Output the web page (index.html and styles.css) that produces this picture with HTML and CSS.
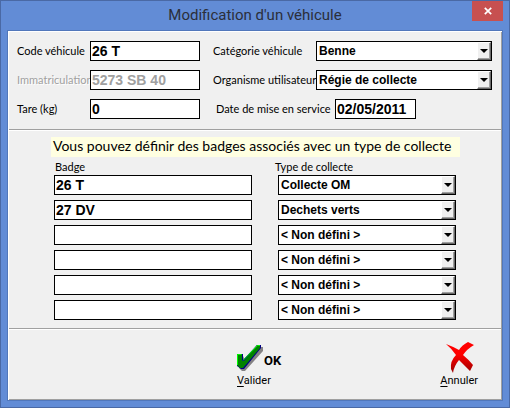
FILE: index.html
```html
<!DOCTYPE html>
<html lang="fr">
<head>
<meta charset="utf-8">
<title>Modification d'un véhicule</title>
<link rel="stylesheet" href="styles.css">
</head>
<body>
<form class="window">
  <header class="titlebar">
    <h1 class="title">Modification d'un véhicule</h1>
    <button type="button" class="close" aria-label="Fermer">
      <svg width="8" height="8" viewBox="0 0 8 8"><path d="M.8 .8 7.2 7.2M7.2 .8 .8 7.2" stroke="#fff" stroke-width="1.7"/></svg>
    </button>
  </header>
  <main class="client">
    <section class="panel vehicle">
      <div class="fields">
        <label for="code">Code véhicule</label>
        <input class="box" id="code" value="26 T">
        <label for="immat" class="off">Immatriculation</label>
        <input class="box" id="immat" value="5273 SB 40" disabled>
        <label for="tare">Tare (kg)</label>
        <input class="box" id="tare" value="0">
      </div>
      <div class="rows">
        <div class="row">
          <label for="cat">Catégorie véhicule</label>
          <span class="combo"><select class="box" id="cat"><option>Benne</option></select><span class="drop"></span></span>
        </div>
        <div class="row">
          <label for="org">Organisme utilisateur</label>
          <span class="combo"><select class="box" id="org"><option>Régie de collecte</option></select><span class="drop"></span></span>
        </div>
        <div class="row service">
          <label for="date">Date de mise en service</label>
          <input class="box date" id="date" value="02/05/2011">
        </div>
      </div>
    </section>
    <section class="panel badges">
      <p class="notice">Vous pouvez définir des badges associés avec un type de collecte</p>
      <div class="pairs">
        <label for="b1">Badge</label>
        <label for="t1" class="type">Type de collecte</label>
        <input class="box" id="b1" value="26 T">
        <span class="combo"><select class="box" id="t1"><option>Collecte OM</option></select><span class="drop"></span></span>
        <input class="box" aria-label="Badge 2" value="27 DV">
        <span class="combo"><select class="box" aria-label="Type 2"><option>Dechets verts</option></select><span class="drop"></span></span>
        <input class="box" aria-label="Badge 3">
        <span class="combo"><select class="box" aria-label="Type 3"><option>&lt; Non défini &gt;</option></select><span class="drop"></span></span>
        <input class="box" aria-label="Badge 4">
        <span class="combo"><select class="box" aria-label="Type 4"><option>&lt; Non défini &gt;</option></select><span class="drop"></span></span>
        <input class="box" aria-label="Badge 5">
        <span class="combo"><select class="box" aria-label="Type 5"><option>&lt; Non défini &gt;</option></select><span class="drop"></span></span>
        <input class="box" aria-label="Badge 6">
        <span class="combo"><select class="box" aria-label="Type 6"><option>&lt; Non défini &gt;</option></select><span class="drop"></span></span>
      </div>
    </section>
    <section class="actions">
      <button type="button" class="action ok">
        <span class="face">
          <svg width="27" height="28" viewBox="0 0 27 28">
            <path d="M2 12h4l3 6L22 3h4v4L8 27H5L2 24z" fill="#848284"/>
            <path d="M0 10h6v6L20 1h4v3L7 25H4L0 22z" fill="#000084"/>
            <path d="M0 10h5v7h2L20 1h3v3L6 24H3L0 21z" fill="#008200"/>
            <path d="M.5 21V10.500h4M6 16.500 20.500 1.500H23" fill="none" stroke="#00ff00"/>
          </svg>
          <b class="oktext">OK</b>
        </span>
        <span><u>V</u>alider</span>
      </button>
      <button type="button" class="action">
        <svg width="32" height="32" viewBox="0 0 32 32">
          <defs><linearGradient id="red" x1="0" y1="0" x2="0" y2="1"><stop offset="0" stop-color="#f00"/><stop offset=".4" stop-color="#f00"/><stop offset="1" stop-color="#900"/></linearGradient></defs>
          <path d="M3 2Q11 5 16 8Q19 3 25 0L31 3Q24 7 20 13Q25 17 30 23L27 29Q21 23 16 18Q11 24 10 31L8 27Q7 19 13 13Q9 7 3 2Z" fill="url(#red)"/>
        </svg>
        <span><u>A</u>nnuler</span>
      </button>
    </section>
  </main>
</form>
</body>
</html>
```
FILE: styles.css
```css
* { box-sizing: border-box; }
body {
  margin: 0;
  font: 12px/14px "Liberation Sans", Arial, sans-serif;
  color: #000;
}
.window {
  min-height: 100vh;
  display: flex;
  flex-direction: column;
  padding: 0 6px 6px;
  border: 1px solid #4a69a5;
  background: #628cd6;
}
.titlebar {
  position: relative;
  height: 29px;
  display: flex;
  justify-content: center;
}
.title {
  margin: 0;
  font: 15px/29px Roboto, sans-serif;
  color: #2b2f3a;
}
.close {
  position: absolute;
  top: 0;
  right: 0;
  width: 31px;
  height: 20px;
  display: flex;
  align-items: center;
  justify-content: center;
  padding: 0;
  border: 0;
  background: #c75050;
}
.client {
  flex: 1;
  display: flex;
  flex-direction: column;
  border: 1px solid #5177bb;
  background: #f0f0f0;
  box-shadow: inset 1px 1px #fff, inset -1px -1px #a0a0a0;
}
.panel {
  margin: 0 1px;
  border-bottom: 1px solid #a0a0a0;
  box-shadow: 0 1px #fff;
}
.vehicle {
  display: grid;
  grid-template-columns: 183fr 279fr;
  gap: 13px;
  padding: 10px 9px 10px 8px;
}
.fields {
  display: grid;
  grid-template-columns: 73px 1fr;
  gap: 9px 0;
  align-items: center;
}
.rows {
  display: flex;
  flex-direction: column;
  gap: 9px;
}
.row {
  display: grid;
  grid-template-columns: 103px 1fr;
  align-items: center;
}
.service { grid-template-columns: 122px 81px; }
.service label { padding-left: 3px; }
label {
  font: 11px/14px Lato, sans-serif;
  white-space: nowrap;
}
.off {
  color: #a0a0a0;
  text-shadow: 1px 1px #fff;
}
.box {
  width: 100%;
  min-width: 0;
  height: 20px;
  margin: 0;
  padding: 0 1px;
  border: 1px solid #000;
  border-radius: 0;
  outline: 0;
  background: #fff;
  color: #000;
  font: bold 14px/18px "Liberation Sans", Arial, sans-serif;
}
.box:disabled { color: #a0a0a0; }
select.box {
  appearance: none;
  padding: 0 17px 2px 2px;
  font-size: 12px;
  display: block;
}
.combo { position: relative; }
.drop {
  position: absolute;
  top: 1px;
  right: 1px;
  bottom: 1px;
  width: 14px;
  display: flex;
  align-items: center;
  justify-content: center;
  border: 1px solid;
  border-color: #fff #696969 #696969 #fff;
  background: #f0f0f0;
  box-shadow: inset -1px -1px #a0a0a0;
  pointer-events: none;
}
.drop::before {
  content: "";
  border: 4px solid transparent;
  border-top-color: #000;
  border-bottom: 0;
}
.badges {
  display: flex;
  flex-direction: column;
  align-items: center;
  padding: 7px 41px 8px 42px;
}
.notice {
  width: 100%;
  margin: 0 0 3px;
  padding: 0 2px 2px;
  background: #ffffe1;
  font: 14px/18px Lato, sans-serif;
  white-space: nowrap;
}
.pairs {
  width: 100%;
  display: grid;
  grid-template-columns: 198fr 178fr;
  gap: 5px 26px;
  padding: 0 4px 0 3px;
}
.pairs label {
  margin-bottom: -4px;
  padding-left: 1px;
}
.pairs .type { margin-left: -4px; }
.actions {
  flex: 1;
  display: flex;
  justify-content: space-between;
  align-items: flex-start;
  padding: 13px 24px 12px 229px;
}
.action {
  display: flex;
  flex-direction: column;
  align-items: center;
  padding: 0;
  border: 0;
  background: none;
  color: #000;
  font: 11px/14px Roboto, sans-serif;
}
.action u { text-underline-offset: 2px; }
.ok { align-items: flex-start; }
.face {
  height: 32px;
  display: flex;
  align-items: center;
}
.oktext {
  padding-top: 5px;
  font: bold 13px/14px Roboto, sans-serif;
}
```
